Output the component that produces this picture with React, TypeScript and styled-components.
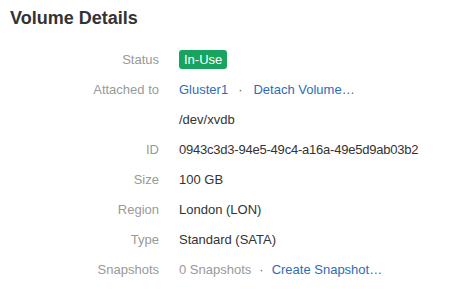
import styled, { createGlobalStyle } from 'styled-components';

const GlobalStyle = createGlobalStyle`
  body {
    margin: 0;
    background: #fff;
    font-family: "Liberation Sans", Arial, sans-serif;
  }
`;

const Panel = styled.div`
  padding: 6px 10px 0;
`;

const Title = styled.h2`
  margin: 0 0 14px;
  font-size: 18px;
  font-weight: 700;
  color: #333;
  line-height: 24px;
`;

const Details = styled.dl`
  margin: 0;
  display: grid;
  grid-template-columns: 149px 1fr;
  column-gap: 20px;
  grid-auto-rows: 30px;
  font-size: 13px;
  align-items: center;
`;

const Label = styled.dt`
  text-align: right;
  color: #999;
`;

const Value = styled.dd<{ muted?: boolean; tight?: boolean }>`
  margin: 0;
  color: ${({ muted }) => (muted ? '#999' : '#333')};
  letter-spacing: ${({ tight }) => (tight ? '-0.22px' : 'normal')};
  display: flex;
  align-items: center;
`;

const Link = styled.a`
  color: #2d6db5;
  text-decoration: none;
`;

const Dot = styled.span<{ wide?: boolean }>`
  margin: ${({ wide }) => (wide ? '0 11px 0 10px' : '0 8px')};
  color: #666;
`;

const Badge = styled.span`
  background: #17a45f;
  color: #fff;
  border-radius: 3px;
  padding: 2px 5px;
  line-height: 15px;
`;

export default function App() {
  return (
    <>
      <GlobalStyle />
      <Panel>
        <Title>Volume Details</Title>
        <Details>
          <Label>Status</Label>
          <Value><Badge>In-Use</Badge></Value>
          <Label>Attached to</Label>
          <Value>
            <Link href="#">Gluster1</Link>
            <Dot wide>·</Dot>
            <Link href="#">Detach Volume…</Link>
          </Value>
          <Label />
          <Value>/dev/xvdb</Value>
          <Label>ID</Label>
          <Value tight>0943c3d3-94e5-49c4-a16a-49e5d9ab03b2</Value>
          <Label>Size</Label>
          <Value>100 GB</Value>
          <Label>Region</Label>
          <Value>London (LON)</Value>
          <Label>Type</Label>
          <Value>Standard (SATA)</Value>
          <Label>Snapshots</Label>
          <Value muted>
            0 Snapshots
            <Dot>·</Dot>
            <Link href="#">Create Snapshot…</Link>
          </Value>
        </Details>
      </Panel>
    </>
  );
}
